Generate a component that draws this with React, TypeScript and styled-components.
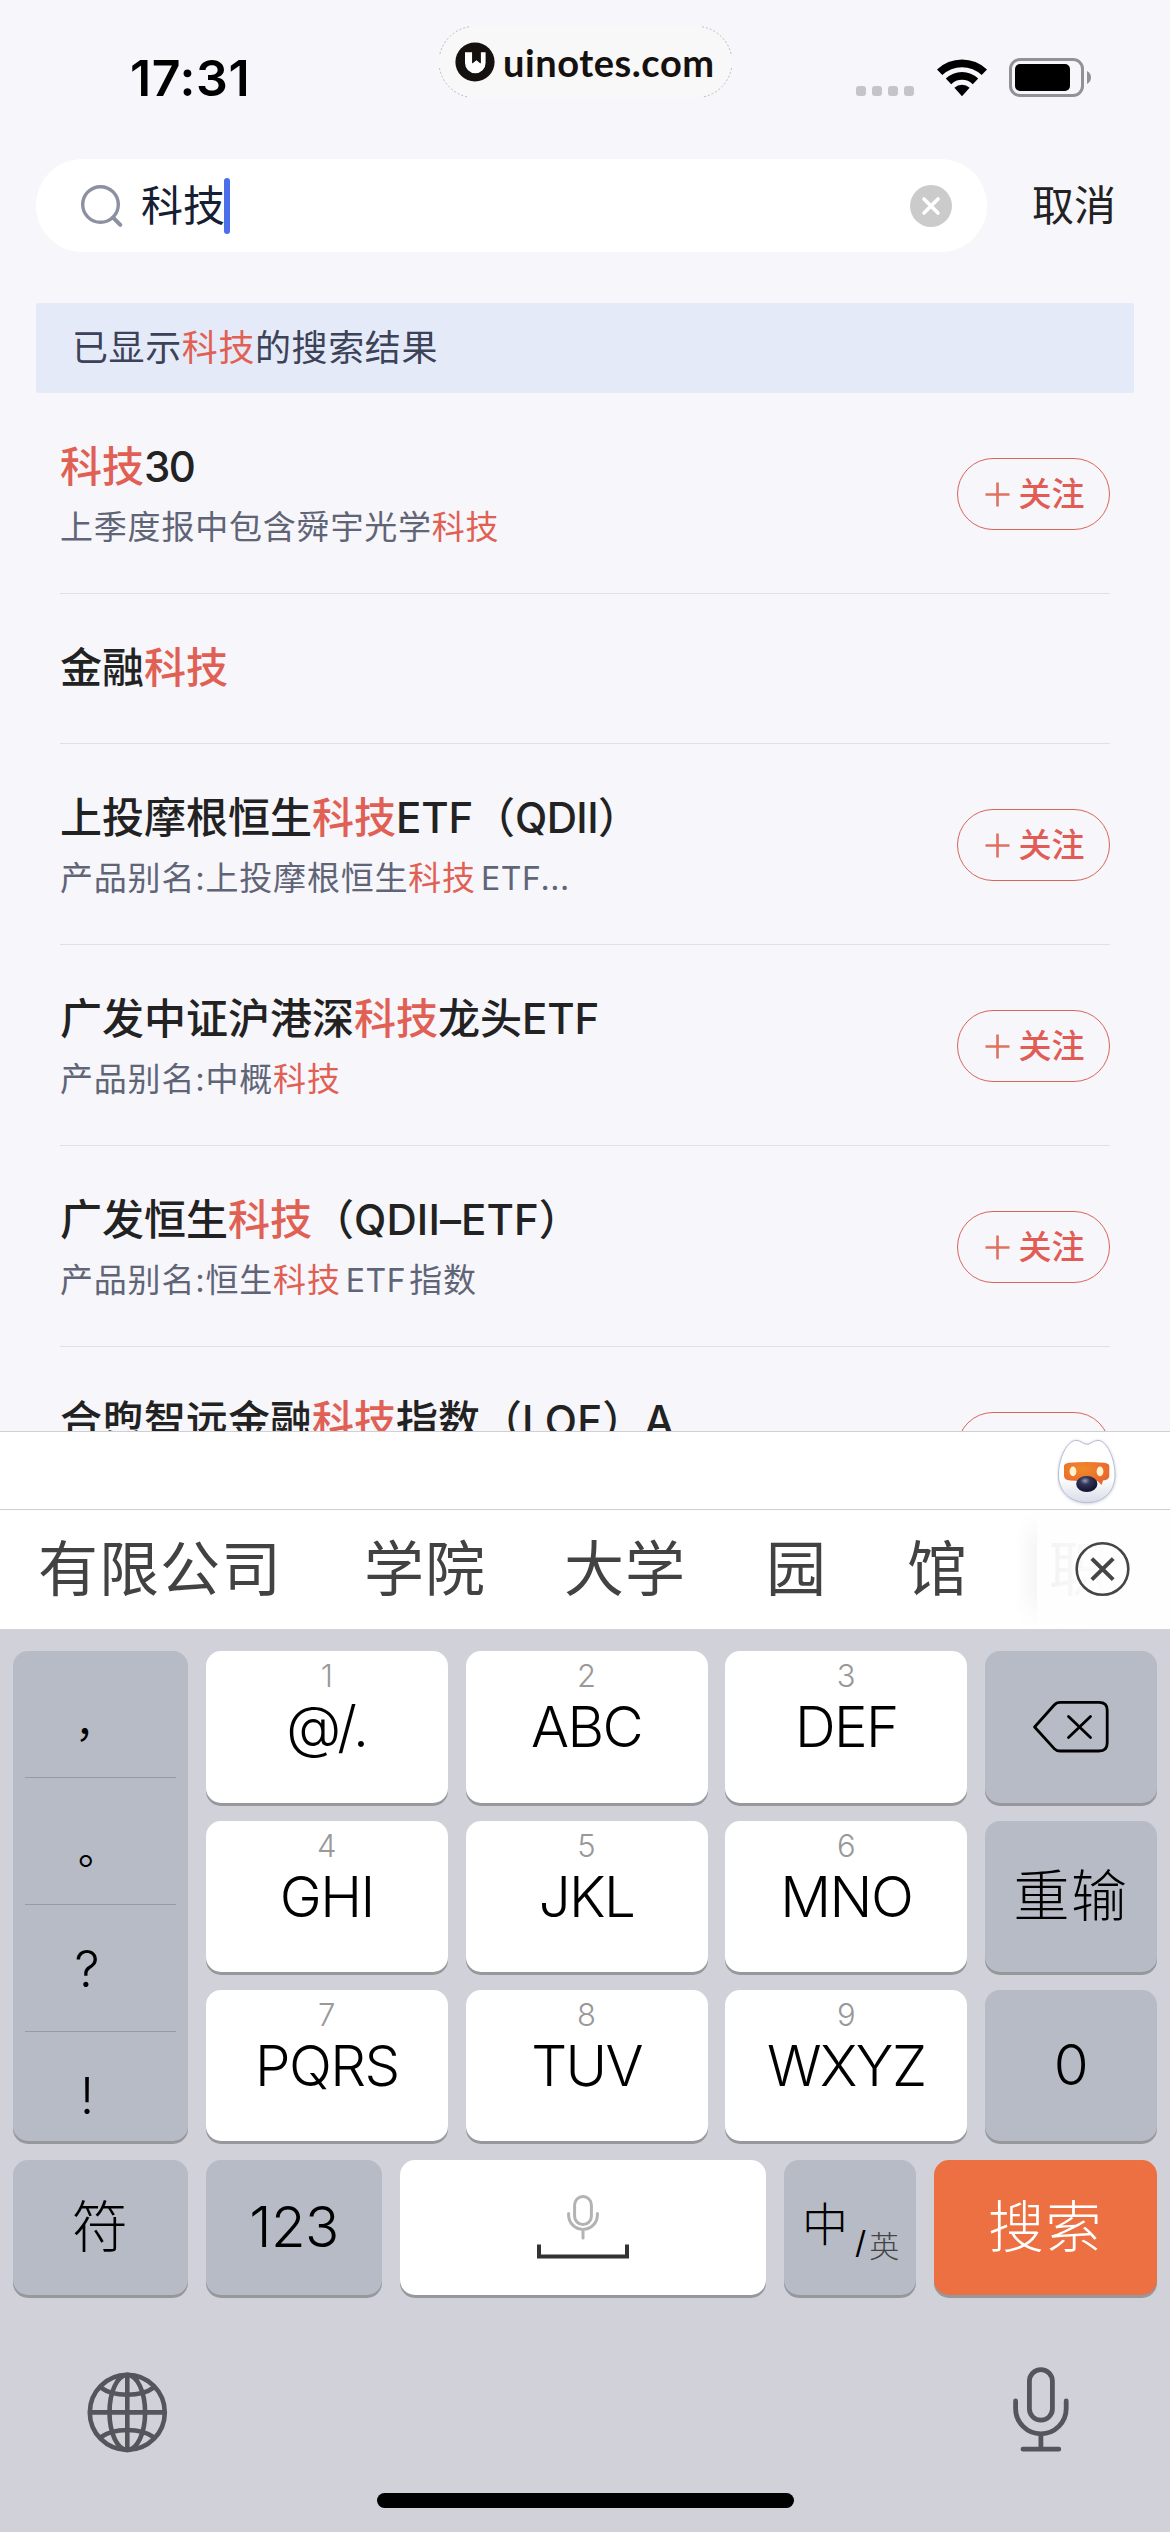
import React from "react";
import styled, { createGlobalStyle } from "styled-components";

const GlobalStyle = createGlobalStyle`
  * { box-sizing: border-box; }
  body {
    margin: 0;
    background: #f7f6fb;
    font-family: Inter, "Noto Sans CJK SC", sans-serif;
  }
  svg { display: block; flex: none; }
`;

const Screen = styled.div`
  width: 1170px;
  height: 2532px;
  overflow: hidden;
  display: flex;
  flex-direction: column;
  background: #f7f6fb;
`;

/* ---------- status bar ---------- */

const StatusBar = styled.header`
  flex: none;
  height: 159px;
  display: flex;
  align-items: flex-start;
  justify-content: space-between;
  padding: 26px 78px 0 130px;
`;

const Clock = styled.time`
  width: 309px;
  margin-top: 22px;
  font-size: 50px;
  line-height: 60px;
  font-weight: 600;
  letter-spacing: 0.6px;
  color: #000;
`;

const Watermark = styled.div`
  position: relative;
  width: 293px;
  height: 72px;
  padding-left: 16px;
  display: flex;
  align-items: center;
  gap: 8px;
  border-radius: 36px;
  background: #f8f8f8;
  font: 700 38px/50px Lato, sans-serif;
  letter-spacing: 0.55px;
  color: #15110f;
`;

const WatermarkEdge = styled.svg`
  position: absolute;
  inset: 0;
`;

const StatusIcons = styled.div`
  flex: 1;
  margin-top: 32px;
  display: flex;
  justify-content: flex-end;
  align-items: flex-start;
`;

const Dots = styled.div`
  display: flex;
  gap: 6px;
  margin: 28px 22px 0 0;
`;

const Dot = styled.i`
  width: 10px;
  height: 10px;
  border-radius: 3px;
  background: #c5c4ca;
`;

const WifiSlot = styled.div`
  margin-right: 21px;
`;

/* ---------- search ---------- */

const SearchRow = styled.div`
  flex: none;
  display: flex;
  align-items: center;
  height: 93px;
  padding: 0 58px 0 36px;
  justify-content: space-between;
`;

const SearchField = styled.div`
  width: 951px;
  height: 93px;
  border-radius: 47px;
  background: #fff;
  display: flex;
  align-items: center;
  padding: 0 35px 0 44px;
`;

const Query = styled.span`
  margin-left: 17px;
  font-size: 42px;
  line-height: 60px;
  color: #172033;
`;

const Caret = styled.i`
  width: 6px;
  height: 56px;
  border-radius: 3px;
  background: #4c6ee8;
  margin: 0 auto 0 -1px;
`;

const Cancel = styled.button`
  border: 0;
  padding: 0;
  background: none;
  font: 400 42px/60px Inter, "Noto Sans CJK SC", sans-serif;
  color: #222;
  margin-right: -4px;
`;

const Banner = styled.div`
  flex: none;
  margin: 51px 36px 0;
  height: 90px;
  padding-left: 36px;
  border-radius: 2px;
  background: #e5eaf8;
  font-size: 36px;
  line-height: 91px;
  letter-spacing: 0.6px;
  color: #3c4257;
`;

/* ---------- results ---------- */

const Results = styled.ul`
  list-style: none;
  margin: 0;
  padding: 0 60px;
  height: 1038px;
  flex: none;
  overflow: hidden;
`;

const Row = styled.li<{ $short?: boolean }>`
  height: ${(p) => (p.$short ? 150 : 201)}px;
  border-bottom: 1px solid #dfe1e8;
  display: flex;
  justify-content: space-between;
`;

const RowText = styled.div`
  padding-top: 43px;
  white-space: nowrap;
`;

const Title = styled.div`
  font-size: 42px;
  line-height: 61px;
  font-weight: 500;
  color: #222;
`;

const Subtitle = styled.div`
  font-size: 33px;
  line-height: 60px;
  letter-spacing: 0.8px;
  color: #5f6577;
`;

const Hit = styled.em`
  font-style: normal;
  color: #e06053;
`;

const Latin = styled.span<{ $track: number }>`
  letter-spacing: ${(p) => p.$track}px;
`;

const NoteLatin = styled.span`
  margin: 0 3px 0 5px;
  font-size: 32px;
  letter-spacing: 0.6px;
`;

const Follow = styled.button`
  width: 153px;
  height: 72px;
  margin-top: 65px;
  padding: 0 0 0 2px;
  display: flex;
  align-items: center;
  justify-content: center;
  gap: 9px;
  border: 1px solid #d8655a;
  border-radius: 36px;
  background: none;
  font: 500 33px/48px Inter, "Noto Sans CJK SC", sans-serif;
  color: #e05c55;
`;

/* ---------- keyboard ---------- */

const AssistBar = styled.div`
  flex: none;
  height: 79px;
  border-top: 1px solid #d0d0d0;
  border-bottom: 1px solid #cfcfcf;
  background: #fff;
  display: flex;
  justify-content: flex-end;
  padding: 6px 52px 0;
`;

const Candidates = styled.div`
  position: relative;
  flex: none;
  height: 119px;
  overflow: hidden;
  background: #fff;
  display: flex;
  padding-left: 38px;
  font-size: 60px;
  line-height: 118px;
  letter-spacing: 1px;
  color: #424242;
  white-space: nowrap;
`;

const Word = styled.span<{ $gap: number }>`
  flex: none;
  margin-right: ${(p) => p.$gap}px;
`;

const Fade = styled.div`
  position: absolute;
  top: 0;
  right: 133px;
  width: 22px;
  height: 119px;
  background: linear-gradient(to right, rgba(0, 0, 0, 0), rgba(0, 0, 0, 0.035));
  mask-image: linear-gradient(transparent, #000 30%, #000 70%, transparent);
`;

const CloseArea = styled.div`
  position: absolute;
  top: 0;
  right: 0;
  width: 133px;
  height: 119px;
  padding: 31px 0 0 38px;
  background: linear-gradient(to right, rgba(254, 254, 254, 0.93), #fefefe 55%);
`;

const Keyboard = styled.div`
  flex: 1;
  background: #d0d1d9;
  padding: 22px 13px 0;
`;

const KeyGrid = styled.div`
  display: grid;
  grid-template-columns: 175px 242px 242px 242px 172px;
  grid-template-rows: 151.5px 151px 151px;
  justify-content: space-between;
  row-gap: 18px;
`;

const BottomKeys = styled.div`
  display: grid;
  grid-template-columns: 175px 176px 366px 132px 223px;
  grid-template-rows: 135px;
  gap: 18px;
  margin-top: 19px;
`;

const Key = styled.div<{ $tone?: "grey" | "orange" }>`
  display: flex;
  align-items: center;
  justify-content: center;
  border-radius: 15px;
  box-shadow: 0 3px 0 #96989c;
  background: ${(p) =>
    p.$tone === "orange" ? "#ec7041" : p.$tone === "grey" ? "#b7bbc5" : "#fff"};
  color: ${(p) => (p.$tone === "orange" ? "#fff" : "#000")};
  font-size: 56px;
  line-height: 60px;
  font-weight: 300;
  letter-spacing: ${(p) => (p.$tone ? 1.6 : 0)}px;
`;

const LetterKey = styled(Key)`
  flex-direction: column;
  justify-content: flex-start;
`;

const Digit = styled.span`
  font-size: 31px;
  line-height: 50px;
  color: #999;
`;

const Letters = styled.span`
  font-size: 56.5px;
  line-height: 51px;
  letter-spacing: -1.6px;
`;

const Numeral = styled.span`
  font-size: 56.5px;
  letter-spacing: -0.6px;
`;

const PunctKey = styled(Key)`
  grid-row: 1 / 4;
  flex-direction: column;
  align-items: stretch;
  justify-content: flex-start;
  padding: 0 12px;
`;

const Mark = styled.div`
  height: 127px;
  padding-right: 27px;
  border-bottom: 1px solid #989ba2;
  font-size: 50px;
  line-height: 128px;
  letter-spacing: 0;
  text-align: center;
  &:last-child { border-bottom: 0; height: 110px; }
`;

const WideMark = styled(Mark)<{ $left: number }>`
  padding: 0 0 0 ${(p) => p.$left}px;
  text-align: left;
  font: 400 40px/138px "Noto Sans CJK SC", sans-serif;
`;

const SpaceKey = styled(Key)`
  flex-direction: column;
  gap: 4px;
`;

const LangKey = styled(Key)`
  justify-content: flex-start;
  align-items: flex-start;
  padding-left: 18px;
  letter-spacing: 0;
`;

const LangMain = styled.span`
  font-size: 46px;
  line-height: 60px;
  margin-top: 34px;
`;

const LangSlash = styled.span`
  font-size: 31px;
  line-height: 40px;
  margin: 63px 3px 0 7px;
  font-weight: 400;
`;

const LangSub = styled.span`
  font-size: 30px;
  line-height: 40px;
  margin-top: 66px;
  color: #444;
`;

const Dock = styled.div`
  display: flex;
  justify-content: space-between;
  margin-top: 72px;
  padding: 0 88px 0 74px;
`;

const HomeIndicator = styled.div`
  width: 417px;
  height: 15px;
  margin: 40.5px auto 0;
  border-radius: 8px;
  background: #000;
`;

/* ---------- drawings ---------- */

const LogoMark = () => (
  <svg width="40" height="40" viewBox="0 0 40 40">
    <circle cx="20" cy="20" r="19.6" fill="#15110f" />
    <path d="M10 10.2h7.2v11l4.3-3.2 4.3 3.2v-11h4.8V21a10.3 10.3 0 0 1-20.6 0z" fill="#fff" />
    <path d="M17.3 10h8.2v11.4L21.4 18l-4.1 3.4z" fill="#15110f" />
  </svg>
);

const WifiIcon = () => (
  <svg width="52" height="39" viewBox="0 0 52 39">
    <path d="M1 11.5a36 36 0 0 1 50 0l-5.3 5.6a28.5 28.5 0 0 0-39.4 0z" />
    <path d="M9.8 20.6a23.5 23.5 0 0 1 32.4 0l-5.4 5.6a15.6 15.6 0 0 0-21.6 0z" />
    <path d="M18.4 29.8a11 11 0 0 1 15.2 0L26 38.2z" />
  </svg>
);

const BatteryIcon = () => (
  <svg width="83" height="40" viewBox="0 0 83 40">
    <rect x="1.5" y="1.5" width="72" height="36" rx="9.5" fill="none" stroke="#929196" strokeWidth="3" />
    <rect x="6" y="6" width="55" height="27" rx="5" />
    <path d="M78 13q4 2.4 4 6.5t-4 6.5z" fill="#929196" />
  </svg>
);

const SearchIcon = () => (
  <svg width="44" height="44" viewBox="0 0 44 44" fill="none" stroke="#8b91a0" strokeWidth="3.4" strokeLinecap="round">
    <circle cx="20.5" cy="20.5" r="17.8" />
    <path d="M33 33.5l7.3 7.3" strokeWidth="4" />
  </svg>
);

const ClearIcon = () => (
  <svg width="42" height="42" viewBox="0 0 42 42">
    <circle cx="21" cy="21" r="21" fill="#cbcbcb" />
    <path d="M14 14l14 14M28 14L14 28" stroke="#fff" strokeWidth="3.6" strokeLinecap="round" />
  </svg>
);

const PlusIcon = () => (
  <svg width="25" height="25" viewBox="0 0 25 25">
    <path d="M12.5 0.5v24M0.5 12.5h24" stroke="#e07060" strokeWidth="2.6" />
  </svg>
);

const MascotIcon = () => (
  <svg width="61" height="68" viewBox="0 0 61 68">
    <defs>
      <linearGradient id="egg" x1="0" y1="0" x2="0" y2="1">
        <stop offset="0.6" stopColor="#fff" />
        <stop offset="1" stopColor="#d9dce8" />
      </linearGradient>
      <radialGradient id="visor" cx="0.4" cy="0.3" r="0.7">
        <stop offset="0" stopColor="#f08a2c" />
        <stop offset="1" stopColor="#e9652c" />
      </radialGradient>
      <radialGradient id="nose" cx="0.42" cy="0.3" r="0.65">
        <stop offset="0" stopColor="#9a9cb5" />
        <stop offset="0.35" stopColor="#33355a" />
        <stop offset="1" stopColor="#14152f" />
      </radialGradient>
      <filter id="halo" x="-10%" y="-10%" width="120%" height="120%">
        <feDropShadow dx="0" dy="0.5" stdDeviation="1.6" floodColor="#7882aa" floodOpacity="0.45" />
      </filter>
    </defs>
    <path
      d="M30 6.3C26 6.3 24 2.4 19 2.4C11 2.4 1.5 19 1.5 37C1.5 54 14 64.6 30 64.6S58 54 58 37C58 19 49 2.4 41 2.4C36 2.4 34 6.3 30 6.3Z"
      fill="url(#egg)"
      stroke="#b9bed2"
      strokeWidth="1"
      filter="url(#halo)"
    />
    <path
      d="M12 24.8Q30 23.2 47 24.8Q52.3 25.5 52.3 28V38Q52 42 46 42.6L44.6 47L40.5 43Q30 44 13 42.6Q7.3 42 7 38V28Q7.2 25.5 12 24.8Z"
      fill="url(#visor)"
    />
    <ellipse cx="16" cy="33.4" rx="3.4" ry="4.8" fill="#fff2cf" />
    <ellipse cx="43" cy="33.4" rx="3.4" ry="4.8" fill="#fff2cf" />
    <ellipse cx="29.8" cy="46" rx="10.6" ry="8" fill="url(#nose)" />
  </svg>
);

const CloseIcon = () => (
  <svg width="56" height="56" viewBox="0 0 56 56" fill="none" stroke="#454545">
    <circle cx="27.5" cy="28" r="25.8" strokeWidth="2.6" />
    <path d="M16.8 17.6l21.4 21M38.2 17.6l-21.4 21" strokeWidth="4" />
  </svg>
);

const BackspaceIcon = () => (
  <svg width="76" height="52" viewBox="0 0 76 52" fill="none" stroke="#000" strokeWidth="2.8" strokeLinejoin="round">
    <path d="M1.6 26L21 4.2Q23.6 1.4 27 1.4H66Q74.2 1.4 74.2 9V42Q74.2 50 66 50H27Q23.6 50 21 47.4Z" />
    <path d="M35.5 15.5l22 21M57.5 15.5l-22 21" strokeLinecap="round" />
  </svg>
);

const SmallMic = () => (
  <svg width="32" height="45" viewBox="0 0 32 45" fill="none" stroke="#b3b3b3" strokeWidth="3" strokeLinecap="round">
    <rect x="7.6" y="1.6" width="16.8" height="28" rx="8.4" />
    <path d="M1.6 18.5v1.5a14.4 14.4 0 0 0 28.8 0v-1.5M16 34.5v8.5" />
  </svg>
);

const SpaceBracket = () => (
  <svg width="92" height="15" viewBox="0 0 92 15">
    <path d="M2 0.5V12.5H90V0.5" fill="none" stroke="#333" strokeWidth="4" />
  </svg>
);

const GlobeIcon = () => (
  <svg width="82" height="86" viewBox="0 -2.4 82 86" fill="none" stroke="#53565b" strokeWidth="4.6">
    <circle cx="40.3" cy="43" r="37.5" />
    <path d="M40.3 5v76M3 43h75" />
    <ellipse cx="40.3" cy="43" rx="17.8" ry="37.5" />
    <path d="M13.5 18q10 7.4 26.8 7.4T67 18M13.5 68q10-7.4 26.8-7.4T67 68" />
  </svg>
);

const DictationIcon = () => (
  <svg width="56" height="86" viewBox="0 0 56 86" fill="none" stroke="#53565b" strokeWidth="4.8" strokeLinecap="round">
    <rect x="16.4" y="2.6" width="23" height="50.6" rx="11.5" />
    <path d="M2.6 34v7.5a25.2 25.2 0 0 0 50.6 0V34M27.9 67v15M10 82.2h35.8" />
  </svg>
);

/* ---------- data ---------- */

type Result = {
  title: React.ReactNode;
  note?: React.ReactNode;
  follow?: boolean;
};

const K = <Hit>科技</Hit>;

const results: Result[] = [
  { title: <>{K}<Latin $track={-1.6}>30</Latin></>, note: <>上季度报中包含舜宇光学{K}</>, follow: true },
  { title: <>金融{K}</> },
  {
    title: <>上投摩根恒生{K}<Latin $track={-0.2}>ETF</Latin>（<Latin $track={-0.6}>QDII</Latin>）</>,
    note: <>产品别名:上投摩根恒生{K}<NoteLatin>ETF...</NoteLatin></>,
    follow: true,
  },
  {
    title: <>广发中证沪港深{K}龙头<Latin $track={-0.2}>ETF</Latin></>,
    note: <>产品别名:中概{K}</>,
    follow: true,
  },
  {
    title: <>广发恒生{K}（<Latin $track={0.1}>QDII–ETF</Latin>）</>,
    note: <>产品别名:恒生{K}<NoteLatin>ETF</NoteLatin>指数</>,
    follow: true,
  },
  {
    title: <>合煦智远金融{K}指数（<Latin $track={0.2}>LOF</Latin>）A</>,
    follow: true,
  },
];

const candidates: [string, number][] = [
  ["有限公司", 82],
  ["学院", 78],
  ["大学", 80],
  ["园", 80],
  ["馆", 81],
  ["职", 0],
];

const letterRows: [string, string][][] = [
  [["1", "@/."], ["2", "ABC"], ["3", "DEF"]],
  [["4", "GHI"], ["5", "JKL"], ["6", "MNO"]],
  [["7", "PQRS"], ["8", "TUV"], ["9", "WXYZ"]],
];

const sideKeys = [<BackspaceIcon />, "重输", <Numeral>0</Numeral>];

export default function App() {
  return (
    <>
      <GlobalStyle />
      <Screen>
        <StatusBar>
          <Clock>17:31</Clock>
          <Watermark>
            <WatermarkEdge width="293" height="72" viewBox="0 0 293 72" fill="none" stroke="#bbb" strokeWidth="1" strokeDasharray="2 2">
              <path d="M30 .8A36 36 0 0 0 .5 30M.5 42A36 36 0 0 0 30 71.2M263 .8A36 36 0 0 1 292.5 30M292.5 42A36 36 0 0 1 263 71.2" />
            </WatermarkEdge>
            <LogoMark />
            uinotes.com
          </Watermark>
          <StatusIcons>
            <Dots>
              <Dot /><Dot /><Dot /><Dot />
            </Dots>
            <WifiSlot>
              <WifiIcon />
            </WifiSlot>
            <BatteryIcon />
          </StatusIcons>
        </StatusBar>

        <SearchRow>
          <SearchField>
            <SearchIcon />
            <Query>科技</Query>
            <Caret />
            <ClearIcon />
          </SearchField>
          <Cancel>取消</Cancel>
        </SearchRow>

        <Banner>已显示{K}的搜索结果</Banner>

        <Results>
          {results.map((r, i) => (
            <Row key={i} $short={!r.follow}>
              <RowText>
                <Title>{r.title}</Title>
                {r.note && <Subtitle>{r.note}</Subtitle>}
              </RowText>
              {r.follow && (
                <Follow>
                  <PlusIcon />
                  关注
                </Follow>
              )}
            </Row>
          ))}
        </Results>

        <AssistBar>
          <MascotIcon />
        </AssistBar>
        <Candidates>
          {candidates.map(([word, gap]) => (
            <Word key={word} $gap={gap}>{word}</Word>
          ))}
          <Fade />
          <CloseArea>
            <CloseIcon />
          </CloseArea>
        </Candidates>

        <Keyboard>
          <KeyGrid>
            <PunctKey $tone="grey">
              <WideMark $left={50}>，</WideMark>
              <WideMark $left={53}>。</WideMark>
              <Mark>?</Mark>
              <Mark>!</Mark>
            </PunctKey>
            {letterRows.map((row, i) => (
              <React.Fragment key={i}>
                {row.map(([digit, letters]) => (
                  <LetterKey key={digit}>
                    <Digit>{digit}</Digit>
                    <Letters>{letters}</Letters>
                  </LetterKey>
                ))}
                <Key $tone="grey">{sideKeys[i]}</Key>
              </React.Fragment>
            ))}
          </KeyGrid>
          <BottomKeys>
            <Key $tone="grey">符</Key>
            <Key $tone="grey"><Numeral>123</Numeral></Key>
            <SpaceKey>
              <SmallMic />
              <SpaceBracket />
            </SpaceKey>
            <LangKey $tone="grey">
              <LangMain>中</LangMain>
              <LangSlash>/</LangSlash>
              <LangSub>英</LangSub>
            </LangKey>
            <Key $tone="orange">搜索</Key>
          </BottomKeys>
          <Dock>
            <GlobeIcon />
            <DictationIcon />
          </Dock>
          <HomeIndicator />
        </Keyboard>
      </Screen>
    </>
  );
}
